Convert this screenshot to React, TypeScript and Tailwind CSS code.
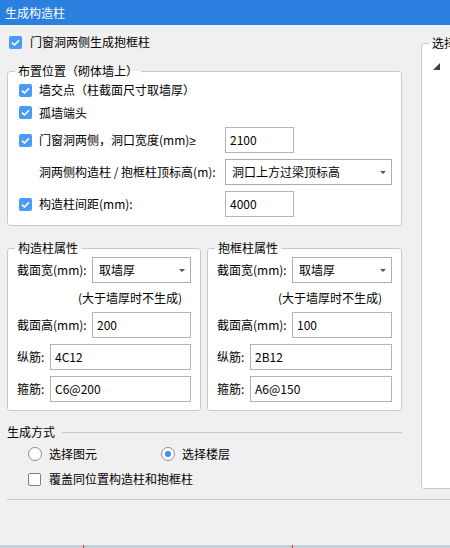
import React from "react";

function Check({ checked }: { checked: boolean }) {
  return checked ? (
    <span className="w-[13px] h-[13px] rounded-[2px] bg-[#4a9bf6] flex items-center justify-center shrink-0">
      <svg width="9" height="7" viewBox="0 0 9 7">
        <path d="M1 3.6 L3.5 6 L8 1.2" stroke="white" strokeWidth="1.6" fill="none" />
      </svg>
    </span>
  ) : (
    <span className="w-[13px] h-[13px] rounded-[2px] border border-[#808080] bg-white shrink-0" />
  );
}

function Radio({ checked }: { checked: boolean }) {
  return (
    <span className="w-[14px] h-[14px] rounded-full border border-[#8c8c8c] bg-white flex items-center justify-center shrink-0">
      {checked && <span className="w-[6px] h-[6px] rounded-full bg-[#3d8ff0]" />}
    </span>
  );
}

function Input({ value, className }: { value: string; className: string }) {
  return (
    <div className={"h-[26px] border border-[#b4b4b4] bg-white flex items-center pl-[4px] shrink-0 " + className}>
      {value}
    </div>
  );
}

function Select({ value, className }: { value: string; className: string }) {
  return (
    <div className={"h-[26px] border border-[#adadad] bg-white flex items-center pl-[6px] pr-[5px] shrink-0 " + className}>
      <span className="flex-1">{value}</span>
      <svg width="6" height="3" viewBox="0 0 6 3">
        <path d="M0 0H6L3 3Z" fill="#555" />
      </svg>
    </div>
  );
}

function PropGroup({
  title,
  width,
  h,
  zj,
  gj,
}: {
  title: string;
  width: string;
  h: string;
  zj: string;
  gj: string;
}) {
  return (
    <fieldset className={"border border-[#c9c9c9] rounded-[3px] bg-white shrink-0 " + width}>
      <legend className="ml-[7px] px-[3px] leading-[16px]">{title}</legend>
      <div className="pl-[9px] pr-[9px] pb-[8px]">
        <div className="mt-[1px] flex items-center">
          <span className="w-[75px] shrink-0">截面宽(mm):</span>
          <Select value="取墙厚" className="flex-1" />
        </div>
        <div className="h-[29px] flex items-center pl-[61px]">(大于墙厚时不生成)</div>
        <div className="flex items-center">
          <span className="w-[75px] shrink-0">截面高(mm):</span>
          <Input value={h} className="flex-1" />
        </div>
        <div className="mt-[6px] flex items-center">
          <span className="w-[33px] shrink-0">纵筋:</span>
          <Input value={zj} className="flex-1" />
        </div>
        <div className="mt-[6px] flex items-center">
          <span className="w-[33px] shrink-0">箍筋:</span>
          <Input value={gj} className="flex-1" />
        </div>
      </div>
    </fieldset>
  );
}

export default function App() {
  return (
    <div className="w-[450px] h-[548px] bg-[#f0f0f0] overflow-hidden flex flex-col text-[12px] leading-[16px] text-black font-['Noto_Sans_CJK_SC','Noto_Sans',sans-serif]">
      <div className="h-[25px] shrink-0 bg-[#2b7fdf] text-white flex items-center pl-[5px]">生成构造柱</div>

      <div className="h-[474px] shrink-0 flex items-start">
        <div className="ml-[7px] w-[395px] shrink-0 flex flex-col">
          <div className="mt-[7px] h-[20px] flex items-center gap-[8px] pl-[2px]">
            <Check checked />
            <span>门窗洞两侧生成抱框柱</span>
          </div>

          <fieldset className="mt-[11px] border border-[#c9c9c9] rounded-[3px] bg-white">
            <legend className="ml-[7px] px-[3px] leading-[16px]">布置位置（砌体墙上）</legend>
            <div className="pl-[11px] pr-[9px] pb-[8px]">
              <div className="h-[22px] flex items-center gap-[7px]">
                <Check checked />
                <span>墙交点（柱截面尺寸取墙厚）</span>
              </div>
              <div className="h-[23px] flex items-center gap-[7px]">
                <Check checked />
                <span>孤墙端头</span>
              </div>
              <div className="mt-[3px] flex items-center">
                <div className="w-[206px] shrink-0 flex items-center gap-[7px]">
                  <Check checked />
                  <span>
                    门窗洞两侧，洞口宽度(mm)<span className="font-['Liberation_Sans',sans-serif]">≥</span>
                  </span>
                </div>
                <Input value="2100" className="w-[69px]" />
              </div>
              <div className="mt-[6px] flex items-center">
                <div className="w-[206px] shrink-0 pl-[20px]">洞两侧构造柱 / 抱框柱顶标高(m):</div>
                <Select value="洞口上方过梁顶标高" className="w-[167px]" />
              </div>
              <div className="mt-[6px] flex items-center">
                <div className="w-[206px] shrink-0 flex items-center gap-[7px]">
                  <Check checked />
                  <span>构造柱间距(mm):</span>
                </div>
                <Input value="4000" className="w-[69px]" />
              </div>
            </div>
          </fieldset>

          <div className="mt-[14px] flex gap-[6px]">
            <PropGroup title="构造柱属性" width="w-[194px]" h="200" zj="4C12" gj="C6@200" />
            <PropGroup title="抱框柱属性" width="w-[195px]" h="100" zj="2B12" gj="A6@150" />
          </div>

          <div className="mt-[11px] h-[20px] flex items-center">
            <span>生成方式</span>
            <div className="ml-[7px] flex-1 h-px bg-[#c8c8c8]" />
          </div>
          <div className="h-[24px] flex items-center pl-[21px]">
            <div className="w-[133px] flex items-center gap-[7px]">
              <Radio checked={false} />
              <span>选择图元</span>
            </div>
            <div className="flex items-center gap-[7px]">
              <Radio checked />
              <span>选择楼层</span>
            </div>
          </div>
          <div className="h-[26px] flex items-center pl-[21px] gap-[8px]">
            <Check checked={false} />
            <span>覆盖同位置构造柱和抱框柱</span>
          </div>
        </div>

        <fieldset className="ml-[19px] mt-[10px] h-[454px] w-[80px] shrink-0 border border-[#c9c9c9] rounded-[3px] bg-white">
          <legend className="ml-[7px] px-[3px] leading-[16px] whitespace-nowrap">选择楼层</legend>
          <div className="mt-[12px] ml-[11px]">
            <svg width="7" height="7" viewBox="0 0 7 7">
              <polygon points="7,0 7,7 0,7" fill="#404040" />
            </svg>
          </div>
        </fieldset>
      </div>

      <div className="ml-[7px] h-px shrink-0 bg-[#c8c8c8]" />
      <div className="flex-1" />
      <div className="h-[3px] shrink-0 bg-[#c8d0d8] flex">
        <div className="w-[83px]" />
        <div className="w-px bg-[#e03030]" />
        <div className="w-[208px]" />
        <div className="w-px bg-[#e03030]" />
      </div>
    </div>
  );
}
